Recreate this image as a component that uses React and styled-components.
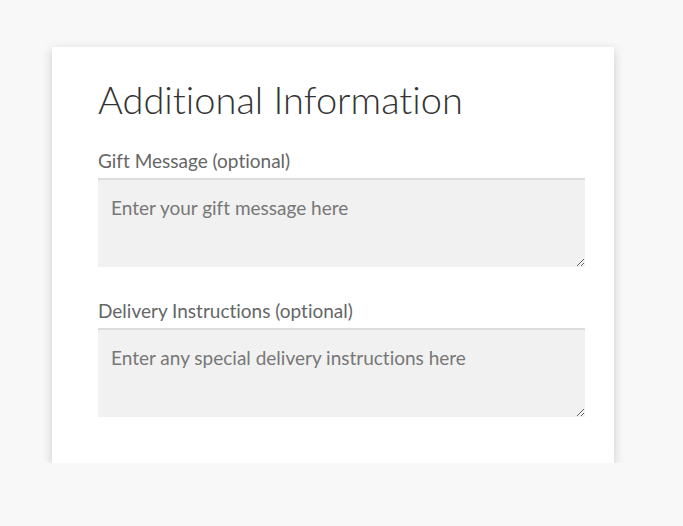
import React from "react";
import styled, { createGlobalStyle } from "styled-components";

const GlobalStyle = createGlobalStyle`
  body {
    margin: 0;
    background-color: #f8f8f8;
    font-family: "Source Sans Pro", "Lato", "Noto Sans", sans-serif;
    font-variant-ligatures: none;
  }
`;

const Page = styled.div`
  padding: 47px 0 0 52px;
`;

const Card = styled.section`
  width: 562px;
  box-sizing: border-box;
  padding: 28px 29px 46px 46px;
  background-color: #fff;
  box-shadow: 0 3px 10px rgba(0, 0, 0, 0.18);
`;

const Title = styled.h2`
  margin: 0 0 27px;
  font-size: 38px;
  font-weight: 300;
  line-height: 48px;
  color: #333;
`;

const Field = styled.div`
  display: flex;
  flex-direction: column;
  gap: 6px;
  & + & {
    margin-top: 33px;
  }
`;

const Label = styled.label`
  font-size: 19px;
  line-height: 22px;
  color: #666;
`;

const TextArea = styled.textarea`
  display: block;
  box-sizing: border-box;
  width: 100%;
  height: 89px;
  margin: 0;
  padding: 14px 13px;
  border: none;
  border-top: 2px solid #dcdcdc;
  background-color: #f1f1f1;
  font-family: inherit;
  font-variant-ligatures: none;
  font-size: 19px;
  line-height: 27px;
  color: #555;
  resize: vertical;
  &::placeholder {
    color: #777;
  }
  &:focus {
    outline: none;
  }
`;

export default function App() {
  return (
    <>
      <GlobalStyle />
      <Page>
        <Card>
          <Title>Additional Information</Title>
          <Field>
            <Label htmlFor="gift">Gift Message (optional)</Label>
            <TextArea id="gift" placeholder="Enter your gift message here" />
          </Field>
          <Field>
            <Label htmlFor="delivery">Delivery Instructions (optional)</Label>
            <TextArea
              id="delivery"
              placeholder="Enter any special delivery instructions here"
            />
          </Field>
        </Card>
      </Page>
    </>
  );
}
